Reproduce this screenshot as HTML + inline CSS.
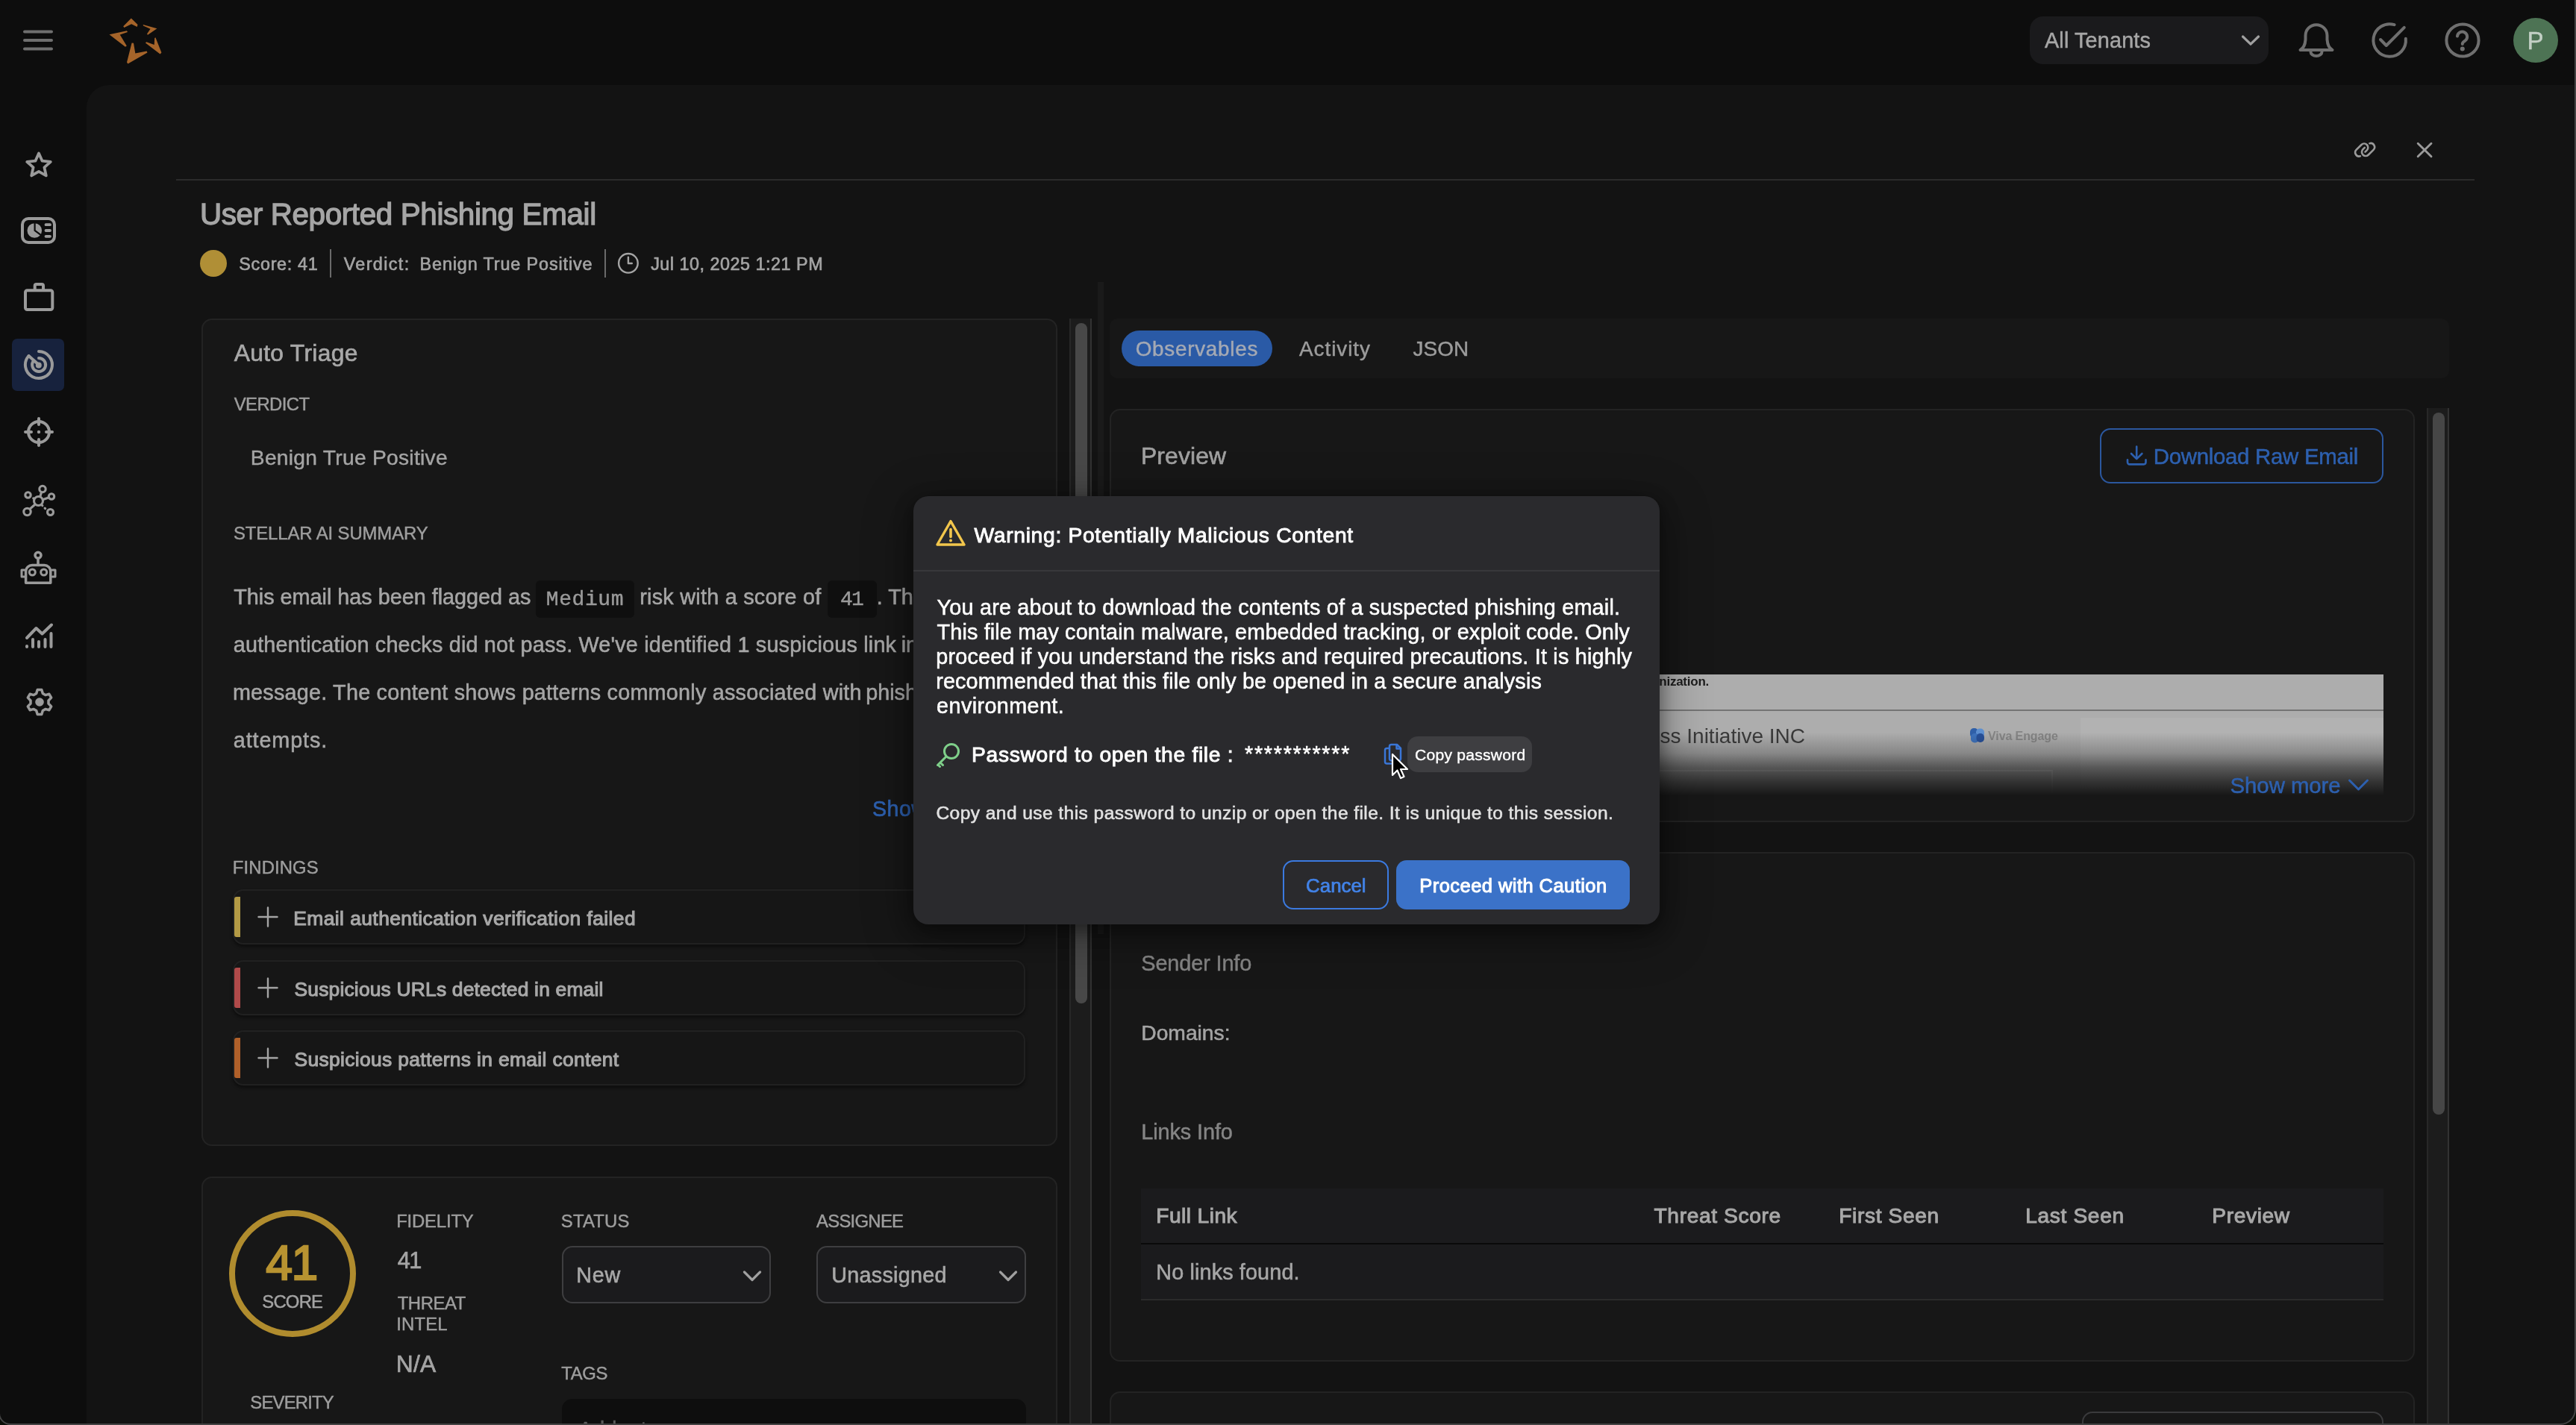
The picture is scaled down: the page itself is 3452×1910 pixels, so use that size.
<!DOCTYPE html>
<html lang="en"><head><meta charset="utf-8"><title>User Reported Phishing Email</title>
<style>
html,body{margin:0;padding:0}
body{width:3452px;height:1910px;background:#0d0d0d;position:relative;overflow:hidden;font-family:'Liberation Sans',sans-serif;transform:translateZ(0)}
.a{position:absolute}
.t{line-height:1;white-space:pre}
</style></head><body>
<div class="a" style="left:116px;top:114px;width:3334px;height:1800px;background:#131313;border-radius:30px 0 0 0;"></div>
<svg class="a" style="left:27px;top:36px;" width="48" height="36" viewBox="0 0 48 36" fill="none"><g stroke="#6f6f6f" stroke-width="4" stroke-linecap="round"><path d="M6 6.5H42M6 18H42M6 29.5H42"/></g></svg>
<svg class="a" style="left:140px;top:18px;" width="84" height="74" viewBox="0 0 84 74" fill="none"><g fill="#a5642a" transform="translate(-140,-18)"><path d="M175.8 24.6 L184.5 33 L183.7 36.1 L176.1 32.2 L166.4 37 L165.2 35.3Z"/><path d="M191.7 33 L210.4 38.2 L198 46.8 L197 45.4 L201.5 38.8 L192 34.4Z"/><path d="M146.5 46.3 L170 41.3 L171 42.9 L160.7 46.6 L169.8 61.5 L167.9 62.7Z"/><path d="M208.4 50.2 L216.4 70.6 L214.6 72.4 L194.9 57.6 L196.2 56.2 L206.7 59.9 L207.2 51Z"/><path d="M176.6 57.4 L179 57.7 L181.3 71.6 L196.6 68.6 L197.5 70.6 L171.4 85.5 L170 83.6Z"/></g></svg>
<div class="a" style="left:2720px;top:22px;width:320px;height:64px;background:#1a1a1c;border-radius:18px;"></div>
<div class="a t" id="t1" style="left:2740.00px;top:40.30px;font-size:28.86px;color:#a6a6a6;letter-spacing:0.123px;-webkit-text-stroke:0.5px #a6a6a6;">All Tenants</div>
<svg class="a" style="left:3000px;top:42px;" width="32" height="24" viewBox="0 0 32 24" fill="none"><path d="M5.5 7 L16 17.2 L26.5 7" stroke="#a0a0a0" stroke-width="3.2" stroke-linecap="round" stroke-linejoin="round"/></svg>
<svg class="a" style="left:3076px;top:26px;" width="56" height="56" viewBox="0 0 56 56" fill="none"><g stroke="#6f6f6f" stroke-width="4" stroke-linecap="round" stroke-linejoin="round" transform="translate(-3076,-26)"><path d="M3082.5 67 C3087 64.5 3089 60 3089.5 53 V47.7 A14.5 14.5 0 0 1 3118.5 47.7 V53 C3119 60 3121 64.5 3125.5 67 Z"/><path d="M3096.5 69.5 A7.5 5.5 0 0 0 3111.5 69.5"/></g></svg>
<svg class="a" style="left:3174px;top:26px;" width="56" height="56" viewBox="0 0 56 56" fill="none"><g stroke="#6f6f6f" stroke-width="4" stroke-linecap="round" stroke-linejoin="round" transform="translate(-3174,-26)"><path d="M3223.8 51.7 A21.75 21.75 0 1 1 3208.6 33.2"/><path d="M3190 53 L3197.8 61 L3221.8 36.8"/></g></svg>
<svg class="a" style="left:3272px;top:26px;" width="56" height="56" viewBox="0 0 56 56" fill="none"><g stroke="#6f6f6f" stroke-width="4" stroke-linecap="round" stroke-linejoin="round" transform="translate(-3272,-26)"><circle cx="3300" cy="54" r="21.6"/><path d="M3293 48.5 a6.6 6.6 0 1 1 10.5 6 c-2.6 1.6 -3.7 2.4 -3.7 4.4"/><circle cx="3299.8" cy="65.5" r="3" fill="#6f6f6f" stroke="none"/></g></svg>
<div class="a" style="left:3368px;top:24px;width:60px;height:60px;background:#4d7354;border-radius:30px;"></div>
<div class="a t" id="t2" style="left:3386.41px;top:38.18px;font-size:33.16px;color:#c3d0c5;-webkit-text-stroke:0.45px #c3d0c5;">P</div>
<svg class="a" style="left:0px;top:190px;" width="104" height="60" viewBox="0 0 104 60" fill="none"><path d="M52.0,15.4 L56.6,25.7 L67.8,26.9 L59.4,34.4 L61.8,45.4 L52.0,39.8 L42.2,45.4 L44.6,34.4 L36.2,26.9 L47.4,25.7Z" stroke="#9a9a9a" stroke-linecap="round" stroke-linejoin="round" stroke-width="3.8"/></svg>
<svg class="a" style="left:0px;top:280px;" width="104" height="60" viewBox="0 0 104 60" fill="none"><g stroke="#9a9a9a" stroke-linecap="round" stroke-linejoin="round" stroke-width="4" transform="translate(0,-280)"><rect x="30" y="293" width="43" height="32" rx="8"/><circle cx="46.3" cy="309" r="9.8" fill="#9a9a9a" stroke="none"/><path d="M46.6 298 V309 L56 315.8" stroke="#0d0d0d" stroke-width="2.2" stroke-linejoin="miter" stroke-linecap="butt"/><path d="M61.5 301.2H67M61.5 309H67M61.5 316.8H67" stroke-width="3.8"/></g></svg>
<svg class="a" style="left:0px;top:370px;" width="104" height="60" viewBox="0 0 104 60" fill="none"><g stroke="#9a9a9a" stroke-linecap="round" stroke-linejoin="round" stroke-width="4" transform="translate(0,-370)"><rect x="34" y="389.3" width="36.3" height="25.7" rx="2.5"/><path d="M46.7 389 V383 a2 2 0 0 1 2 -2 H56 a2 2 0 0 1 2 2 V389"/></g></svg>
<div class="a" style="left:16px;top:454px;width:70px;height:70px;background:#17223d;border-radius:7px;"></div>
<svg class="a" style="left:0px;top:454px;" width="104" height="70" viewBox="0 0 104 70" fill="none"><g stroke="#9a9a9a" stroke-linecap="round" stroke-linejoin="round" stroke-width="4" transform="translate(0,-454)"><path d="M52 471 a18 18 0 1 1 -13.5 6"/><path d="M38.5 477 L52 489"/><path d="M52 480 a9 9 0 1 1 -7 3.5"/><circle cx="51.8" cy="489.4" r="2" fill="#9a9a9a"/></g></svg>
<svg class="a" style="left:0px;top:550px;" width="104" height="60" viewBox="0 0 104 60" fill="none"><g stroke="#9a9a9a" stroke-linecap="round" stroke-linejoin="round" stroke-width="4" transform="translate(0,-550)"><circle cx="52" cy="579" r="14"/><path d="M52 561V569M52 589V597M34 579H42M62 579H70"/><circle cx="52" cy="579" r="1.2" fill="#9a9a9a" stroke-width="2"/></g></svg>
<svg class="a" style="left:0px;top:640px;" width="104" height="62" viewBox="0 0 104 62" fill="none"><g stroke="#9a9a9a" stroke-linecap="round" stroke-linejoin="round" stroke-width="3.1" transform="translate(0,-640)"><circle cx="51.5" cy="671.5" r="6"/><circle cx="57" cy="655.5" r="4.2"/><circle cx="69" cy="665.5" r="3.7"/><circle cx="37.5" cy="663.5" r="3.7"/><circle cx="36.5" cy="686" r="4.7"/><circle cx="67.5" cy="686.5" r="4"/><path d="M54 665 L55.3 660.5M57.8 669.5 L65 667M46.5 676.5 L40.2 682.2"/><path d="M45.4 668.2 L42 666.2M56.3 677.2 L63 684" stroke-dasharray="0.8 4.6"/></g></svg>
<svg class="a" style="left:0px;top:730px;" width="104" height="62" viewBox="0 0 104 62" fill="none"><g stroke="#9a9a9a" stroke-linecap="round" stroke-linejoin="round" stroke-width="3.5" transform="translate(0,-730)"><circle cx="51" cy="744.2" r="4"/><path d="M51 749V756"/><path d="M34.6 781.2 V766 a8.5 8.5 0 0 1 8.5 -8.5 H59.3 a8.5 8.5 0 0 1 8.5 8.5 V781.2 Z"/><path d="M33 764H29V773H33M70 764H74V773H70" stroke-width="3"/><circle cx="43.3" cy="767" r="4" stroke-width="3"/><circle cx="58.7" cy="767" r="4" stroke-width="3"/></g></svg>
<svg class="a" style="left:0px;top:826px;" width="104" height="52" viewBox="0 0 104 52" fill="none"><g stroke="#9a9a9a" stroke-linecap="round" stroke-linejoin="round" stroke-width="4" transform="translate(0,-826)"><path d="M36 855 L48.5 842 L56.5 849.5 L69 837.5"/><path d="M36 866V867M44 857V867M52 860V867M60.5 857V867M68.5 849V867"/></g></svg>
<svg class="a" style="left:0px;top:910px;" width="104" height="62" viewBox="0 0 104 62" fill="none"><g stroke="#9a9a9a" stroke-linecap="round" stroke-linejoin="round" stroke-width="3.5" transform="translate(0,-910)"><path d="M50.2,924.4 L55.8,924.4 L57.3,929.6 L60.8,931.6 L65.9,930.3 L68.7,935.1 L65.0,939.0 L65.0,943.0 L68.7,946.9 L65.9,951.7 L60.8,950.4 L57.3,952.4 L55.8,957.6 L50.2,957.6 L48.7,952.4 L45.2,950.4 L40.1,951.7 L37.3,946.9 L41.0,943.0 L41.0,939.0 L37.3,935.1 L40.1,930.3 L45.2,931.6 L48.7,929.6Z"/><circle cx="53" cy="941" r="5.8" fill="#9a9a9a" stroke="none"/></g></svg>
<svg class="a" style="left:3150px;top:184px;" width="40" height="34" viewBox="0 0 40 34" fill="none"><g stroke="#9a9a9a" stroke-width="2.6" stroke-linecap="round" stroke-linejoin="round"><g transform="translate(14.75,17) rotate(-45)"><path d="M-7.25 4.55 A5.2 5.2 0 0 1 -4.75 -5.2 L4.75 -5.2 A5.2 5.2 0 0 1 4.75 5.2 L1.5 5.2"/></g><g transform="translate(23.5,16.5) rotate(135)"><path d="M-7.25 4.55 A5.2 5.2 0 0 1 -4.75 -5.2 L4.75 -5.2 A5.2 5.2 0 0 1 4.75 5.2 L1.5 5.2"/></g></g></svg>
<svg class="a" style="left:3232px;top:184px;" width="34" height="34" viewBox="0 0 34 34" fill="none"><path d="M8.2 8.3 L26 25.8 M26 8.3 L8.2 25.8" stroke="#9a9a9a" stroke-width="2.9" stroke-linecap="round"/></svg>
<div class="a" style="left:236px;top:240px;width:3080px;height:2px;background:#2b2b2b;"></div>
<div class="a t" id="t3" style="left:267.98px;top:267.34px;font-size:40.38px;color:#a6a6a6;letter-spacing:-0.359px;-webkit-text-stroke:1.3px #a6a6a6;">User Reported Phishing Email</div>
<div class="a" style="left:268px;top:335px;width:36px;height:36px;background:#b08f36;border-radius:18px;"></div>
<div class="a t" id="t4" style="left:320.37px;top:342.68px;font-size:23.36px;color:#a4a4a4;letter-spacing:0.674px;-webkit-text-stroke:0.65px #a4a4a4;">Score: 41</div>
<div class="a" style="left:442px;top:334px;width:2px;height:38px;background:#6a6a6a;"></div>
<div class="a t" id="t5" style="left:460.70px;top:342.68px;font-size:23.36px;color:#a4a4a4;letter-spacing:1.372px;-webkit-text-stroke:0.65px #a4a4a4;">Verdict:</div>
<div class="a t" id="t6" style="left:562.58px;top:342.68px;font-size:23.36px;color:#a4a4a4;letter-spacing:0.879px;-webkit-text-stroke:0.65px #a4a4a4;">Benign True Positive</div>
<div class="a" style="left:810px;top:334px;width:2px;height:38px;background:#6a6a6a;"></div>
<svg class="a" style="left:824px;top:336px;" width="36" height="36" viewBox="0 0 36 36" fill="none"><g stroke="#a4a4a4" stroke-width="2.4" stroke-linecap="round" stroke-linejoin="round"><circle cx="17.9" cy="16.8" r="12.8"/><path d="M17.9 8.6V17H22.8"/></g></svg>
<div class="a t" id="t7" style="left:872.13px;top:342.68px;font-size:23.36px;color:#a4a4a4;letter-spacing:0.514px;-webkit-text-stroke:0.65px #a4a4a4;">Jul 10, 2025 1:21 PM</div>
<div class="a" style="left:270px;top:427px;width:1147px;height:1109px;background:#171717;border-radius:14px;border:2px solid #232323;box-sizing:border-box;"></div>
<div class="a t" id="t8" style="left:313.70px;top:457.72px;font-size:31.81px;color:#a8a8a8;letter-spacing:0.303px;-webkit-text-stroke:0.65px #a8a8a8;">Auto Triage</div>
<div class="a t" id="t9" style="left:313.70px;top:529.75px;font-size:23.86px;color:#9e9e9e;letter-spacing:-0.553px;-webkit-text-stroke:0.45px #9e9e9e;">VERDICT</div>
<div class="a t" id="t10" style="left:335.80px;top:598.89px;font-size:28.19px;color:#a4a4a4;letter-spacing:0.278px;-webkit-text-stroke:0.45px #a4a4a4;">Benign True Positive</div>
<div class="a t" id="t11" style="left:312.95px;top:702.75px;font-size:23.86px;color:#9e9e9e;letter-spacing:-0.083px;-webkit-text-stroke:0.45px #9e9e9e;">STELLAR AI SUMMARY</div>
<div class="a t" id="t12" style="left:313.25px;top:786.33px;font-size:28.79px;color:#a6a6a6;letter-spacing:-0.005px;-webkit-text-stroke:0.55px #a6a6a6;">This email has been flagged as</div>
<div class="a" style="left:718px;top:778px;width:132px;height:50px;background:#0f0f0f;border-radius:6px;"></div>
<div class="a t" id="t13" style="left:731.75px;top:789.79px;font-size:28px;color:#9a9a9a;letter-spacing:0.597px;-webkit-text-stroke:0.45px #9a9a9a;font-family:'Liberation Mono',monospace;">Medium</div>
<div class="a t" id="t14" style="left:857.20px;top:786.33px;font-size:28.79px;color:#a6a6a6;letter-spacing:0.253px;-webkit-text-stroke:0.55px #a6a6a6;">risk with a score of</div>
<div class="a" style="left:1109px;top:778px;width:66px;height:50px;background:#0f0f0f;border-radius:6px;"></div>
<div class="a t" id="t15" style="left:1125.99px;top:789.79px;font-size:28px;color:#9a9a9a;letter-spacing:-1.840px;-webkit-text-stroke:0.45px #9a9a9a;font-family:'Liberation Mono',monospace;">41</div>
<div class="a t" id="t16" style="left:1174.75px;top:786.33px;font-size:28.79px;color:#a6a6a6;-webkit-text-stroke:0.55px #a6a6a6;">. The</div>
<div class="a t" id="t17" style="left:312.80px;top:849.83px;font-size:28.79px;color:#a6a6a6;letter-spacing:0.187px;-webkit-text-stroke:0.55px #a6a6a6;">authentication checks did not pass. We&#x27;ve identified 1 suspicious link</div>
<div class="a t" id="t18" style="left:1207.70px;top:849.83px;font-size:28.79px;color:#a6a6a6;-webkit-text-stroke:0.55px #a6a6a6;">in the</div>
<div class="a t" id="t19" style="left:311.90px;top:913.83px;font-size:28.79px;color:#a6a6a6;letter-spacing:0.219px;-webkit-text-stroke:0.55px #a6a6a6;">message. The content shows patterns commonly associated with</div>
<div class="a t" id="t20" style="left:1160.20px;top:913.83px;font-size:28.79px;color:#a6a6a6;-webkit-text-stroke:0.55px #a6a6a6;">phishing</div>
<div class="a t" id="t21" style="left:312.80px;top:977.83px;font-size:28.79px;color:#a6a6a6;letter-spacing:0.887px;-webkit-text-stroke:0.55px #a6a6a6;">attempts.</div>
<div class="a t" id="t22" style="left:1169.11px;top:1069.91px;font-size:28.64px;color:#2d60af;letter-spacing:0.401px;-webkit-text-stroke:0.65px #2d60af;">Show more</div>
<div class="a t" id="t23" style="left:311.84px;top:1150.75px;font-size:23.86px;color:#9e9e9e;letter-spacing:0.124px;-webkit-text-stroke:0.45px #9e9e9e;">FINDINGS</div>
<div class="a" style="left:312px;top:1192px;width:1062px;height:74px;background:#161616;border-radius:14px;border:2px solid #212121;box-sizing:border-box;box-shadow:0 3px 4px rgba(0,0,0,.45);"></div>
<div class="a" style="left:314px;top:1202px;width:8px;height:54px;background:#b39a45;border-radius:3px 0 0 3px;"></div>
<svg class="a" style="left:341px;top:1211px;" width="36" height="36" viewBox="0 0 36 36" fill="none"><path d="M18 5.5V30.5M5.5 18H30.5" stroke="#a4a4a4" stroke-width="2.4" stroke-linecap="round"/></svg>
<div class="a t" id="t24" style="left:393.24px;top:1218.08px;font-size:26.4px;color:#a8a8a8;letter-spacing:0.432px;-webkit-text-stroke:1.1px #a8a8a8;">Email authentication verification failed</div>
<div class="a" style="left:312px;top:1286.5px;width:1062px;height:74px;background:#161616;border-radius:14px;border:2px solid #212121;box-sizing:border-box;box-shadow:0 3px 4px rgba(0,0,0,.45);"></div>
<div class="a" style="left:314px;top:1296.5px;width:8px;height:54px;background:#b04a4a;border-radius:3px 0 0 3px;"></div>
<svg class="a" style="left:341px;top:1305.5px;" width="36" height="36" viewBox="0 0 36 36" fill="none"><path d="M18 5.5V30.5M5.5 18H30.5" stroke="#a4a4a4" stroke-width="2.4" stroke-linecap="round"/></svg>
<div class="a t" id="t25" style="left:394.48px;top:1312.58px;font-size:26.4px;color:#a8a8a8;letter-spacing:0.192px;-webkit-text-stroke:1.1px #a8a8a8;">Suspicious URLs detected in email</div>
<div class="a" style="left:312px;top:1380.5px;width:1062px;height:74px;background:#161616;border-radius:14px;border:2px solid #212121;box-sizing:border-box;box-shadow:0 3px 4px rgba(0,0,0,.45);"></div>
<div class="a" style="left:314px;top:1390.5px;width:8px;height:54px;background:#b0602a;border-radius:3px 0 0 3px;"></div>
<svg class="a" style="left:341px;top:1399.5px;" width="36" height="36" viewBox="0 0 36 36" fill="none"><path d="M18 5.5V30.5M5.5 18H30.5" stroke="#a4a4a4" stroke-width="2.4" stroke-linecap="round"/></svg>
<div class="a t" id="t26" style="left:394.48px;top:1406.58px;font-size:26.4px;color:#a8a8a8;letter-spacing:0.346px;-webkit-text-stroke:1.1px #a8a8a8;">Suspicious patterns in email content</div>
<div class="a" style="left:270px;top:1577px;width:1147px;height:400px;background:#171717;border-radius:14px;border:2px solid #232323;box-sizing:border-box;"></div>
<div class="a" style="left:307px;top:1621.5px;width:170px;height:170px;border-radius:50%;border:8px solid #b08c2e;box-sizing:border-box"></div>
<div class="a t" id="t27" style="left:356.20px;top:1661.40px;font-size:64.29px;color:#b89331;letter-spacing:-1.400px;-webkit-text-stroke:2.3px #b89331;">41</div>
<div class="a t" id="t28" style="left:351.25px;top:1733.25px;font-size:23.86px;color:#a4a4a4;letter-spacing:-0.776px;-webkit-text-stroke:0.45px #a4a4a4;">SCORE</div>
<div class="a t" id="t29" style="left:335.25px;top:1868.25px;font-size:23.86px;color:#9e9e9e;letter-spacing:-0.786px;-webkit-text-stroke:0.45px #9e9e9e;">SEVERITY</div>
<div class="a t" id="t30" style="left:531.14px;top:1624.75px;font-size:23.86px;color:#9e9e9e;letter-spacing:-0.160px;-webkit-text-stroke:0.45px #9e9e9e;">FIDELITY</div>
<div class="a t" id="t31" style="left:532.82px;top:1675.15px;font-size:30.68px;color:#a4a4a4;letter-spacing:-1.702px;-webkit-text-stroke:0.7px #a4a4a4;">41</div>
<div class="a t" id="t32" style="left:532.63px;top:1734.75px;font-size:23.86px;color:#9e9e9e;letter-spacing:-0.378px;-webkit-text-stroke:0.45px #9e9e9e;">THREAT</div>
<div class="a t" id="t33" style="left:531.14px;top:1762.75px;font-size:23.86px;color:#9e9e9e;letter-spacing:0.210px;-webkit-text-stroke:0.45px #9e9e9e;">INTEL</div>
<div class="a t" id="t34" style="left:530.82px;top:1813.26px;font-size:31.74px;color:#a4a4a4;letter-spacing:0.207px;-webkit-text-stroke:0.7px #a4a4a4;">N/A</div>
<div class="a t" id="t35" style="left:751.75px;top:1624.75px;font-size:23.86px;color:#9e9e9e;letter-spacing:0.233px;-webkit-text-stroke:0.45px #9e9e9e;">STATUS</div>
<div class="a t" id="t36" style="left:1094.00px;top:1624.75px;font-size:23.86px;color:#9e9e9e;letter-spacing:-0.713px;-webkit-text-stroke:0.45px #9e9e9e;">ASSIGNEE</div>
<div class="a" style="left:752.5px;top:1670px;width:280px;height:77px;background:#1b1b1d;border-radius:14px;border:2px solid #3e3e40;box-sizing:border-box;"></div>
<div class="a t" id="t37" style="left:772.26px;top:1694.86px;font-size:28.72px;color:#a8a8a8;letter-spacing:0.720px;-webkit-text-stroke:0.6px #a8a8a8;">New</div>
<svg class="a" style="left:992.0px;top:1697.5px;" width="32" height="24" viewBox="0 0 32 24" fill="none"><path d="M5.5 7 L16 17.5 L26.5 7" stroke="#a0a0a0" stroke-width="3.2" stroke-linecap="round" stroke-linejoin="round"/></svg>
<div class="a" style="left:1094px;top:1670px;width:281px;height:77px;background:#1b1b1d;border-radius:14px;border:2px solid #3e3e40;box-sizing:border-box;"></div>
<div class="a t" id="t38" style="left:1114.20px;top:1694.86px;font-size:28.72px;color:#a8a8a8;letter-spacing:0.303px;-webkit-text-stroke:0.6px #a8a8a8;">Unassigned</div>
<svg class="a" style="left:1334.5px;top:1697.5px;" width="32" height="24" viewBox="0 0 32 24" fill="none"><path d="M5.5 7 L16 17.5 L26.5 7" stroke="#a0a0a0" stroke-width="3.2" stroke-linecap="round" stroke-linejoin="round"/></svg>
<div class="a t" id="t39" style="left:752.13px;top:1829.25px;font-size:23.86px;color:#9e9e9e;letter-spacing:-0.272px;-webkit-text-stroke:0.45px #9e9e9e;">TAGS</div>
<div class="a" style="left:752.5px;top:1875px;width:622.5px;height:60px;background:#0e0e0e;border-radius:14px;"></div>
<div class="a t" id="t40" style="left:775.00px;top:1902.26px;font-size:28.93px;color:#5c5c5c;-webkit-text-stroke:0.45px #5c5c5c;">Add a tag</div>
<div class="a" style="left:1433px;top:427px;width:30px;height:1490px;background:#1c1c1c;border-left:2px solid #282828;border-right:2px solid #323232;box-sizing:border-box;"></div>
<div class="a" style="left:1441px;top:432.5px;width:16px;height:912px;background:#484848;border-radius:8px;"></div>
<div class="a" style="left:1471px;top:378px;width:8px;height:874px;background:#1a1a1a;"></div>
<div class="a" style="left:1486.5px;top:427px;width:1795.5px;height:79.5px;background:#171717;border-radius:10px;"></div>
<div class="a" style="left:1503px;top:443px;width:202px;height:48px;background:#2a5aa6;border-radius:24px;"></div>
<div class="a t" id="t41" style="left:1521.69px;top:453.95px;font-size:27.88px;color:#a4a9b4;letter-spacing:0.717px;-webkit-text-stroke:0.45px #a4a9b4;">Observables</div>
<div class="a t" id="t42" style="left:1741.00px;top:453.95px;font-size:27.88px;color:#9c9c9c;letter-spacing:0.958px;-webkit-text-stroke:0.45px #9c9c9c;">Activity</div>
<div class="a t" id="t43" style="left:1893.56px;top:453.95px;font-size:27.88px;color:#9c9c9c;letter-spacing:0.118px;-webkit-text-stroke:0.45px #9c9c9c;">JSON</div>
<div class="a" style="left:1487px;top:547.5px;width:1748.5px;height:554px;background:#171717;border-radius:14px;border:2px solid #232323;box-sizing:border-box;"></div>
<div class="a t" id="t44" style="left:1529.01px;top:596.18px;font-size:31.89px;color:#a0a0a0;letter-spacing:0.113px;-webkit-text-stroke:0.6px #a0a0a0;">Preview</div>
<div class="a" style="left:2814px;top:573.5px;width:380px;height:74px;border-radius:14px;border:2px solid #2b579e;box-sizing:border-box;"></div>
<svg class="a" style="left:2845px;top:593px;" width="36" height="36" viewBox="0 0 36 36" fill="none"><g stroke="#2d60af" stroke-width="2.6" stroke-linecap="round" stroke-linejoin="round"><path d="M18.2 5.6V22M11 15 L18.2 22.2 L25.4 15"/><path d="M6 23.2V26.6 a2.8 2.8 0 0 0 2.8 2.8H27.7 a2.8 2.8 0 0 0 2.8 -2.8V23.2"/></g></svg>
<div class="a t" id="t45" style="left:2885.70px;top:596.85px;font-size:29.39px;color:#2d60af;letter-spacing:-0.270px;-webkit-text-stroke:0.5px #2d60af;">Download Raw Email</div>
<div class="a" style="left:1529px;top:904px;width:1665px;height:162px;background:#adadad;overflow:hidden"><div class="a" style="left:0;top:47px;width:1665px;height:2px;background:#747474"></div><div class="a" style="left:1259px;top:58px;width:406px;height:110px;background:#b2b2b2"></div><div class="a" style="left:-2px;top:128px;width:1224px;height:60px;border:2px solid #c2c2c2;box-sizing:border-box"></div><div class="a t" style="right:904px;top:1px;font-size:17px;font-weight:700;color:#1c1c1c;letter-spacing:-0.25px">You don't often get email from this sender. Learn why this is important to your organization.</div><div class="a t" style="right:775px;top:69px;font-size:28px;color:#3a3a3a">Awareness Initiative INC</div><svg class="a" style="left:1110px;top:71px" width="22" height="22" viewBox="0 0 22 22"><rect x="1" y="1" width="11" height="13" rx="5" fill="#2f5fa8"/><rect x="9" y="1.5" width="11" height="12" rx="5" fill="#5d8fd0"/><rect x="2" y="8" width="11" height="12.5" rx="5" fill="#3d72bd"/><rect x="9.5" y="8" width="10.5" height="12" rx="5" fill="#27509a"/></svg><div class="a t" style="left:1135px;top:75px;font-size:16px;font-weight:700;color:#858585;letter-spacing:-0.1px">Viva Engage</div><div class="a" style="left:0;top:0;width:1665px;height:162px;background:linear-gradient(to bottom,rgba(23,23,23,0) 0%,rgba(23,23,23,0) 48%,rgba(23,23,23,.25) 65%,rgba(23,23,23,.58) 77%,rgba(23,23,23,.82) 89%,rgba(23,23,23,1) 100%)"></div></div>
<div class="a t" id="t46" style="left:2988.58px;top:1037.85px;font-size:29.39px;color:#2d60af;letter-spacing:-0.067px;-webkit-text-stroke:0.5px #2d60af;">Show more</div>
<svg class="a" style="left:3144px;top:1040px;" width="32" height="24" viewBox="0 0 32 24" fill="none"><path d="M4.5 6 L16.5 18 L28.5 6" stroke="#2d60af" stroke-width="3" stroke-linecap="round" stroke-linejoin="round"/></svg>
<div class="a" style="left:1487px;top:1142px;width:1748.5px;height:683px;background:#171717;border-radius:14px;border:2px solid #232323;box-sizing:border-box;"></div>
<div class="a t" id="t47" style="left:1529.30px;top:1277.26px;font-size:28.93px;color:#858585;letter-spacing:-0.150px;-webkit-text-stroke:0.45px #858585;">Sender Info</div>
<div class="a t" id="t48" style="left:1529.29px;top:1370.08px;font-size:28.26px;color:#a4a4a4;letter-spacing:-0.014px;-webkit-text-stroke:0.55px #a4a4a4;">Domains:</div>
<div class="a t" id="t49" style="left:1529.24px;top:1503.26px;font-size:28.93px;color:#858585;letter-spacing:-0.122px;-webkit-text-stroke:0.45px #858585;">Links Info</div>
<div class="a" style="left:1529px;top:1593px;width:1665px;height:73px;background:#1b1b1d;"></div>
<div class="a" style="left:1529px;top:1666px;width:1665px;height:2px;background:#0a0a0a;"></div>
<div class="a" style="left:1529px;top:1668px;width:1665px;height:73px;background:#1b1b1d;"></div>
<div class="a" style="left:1529px;top:1741px;width:1665px;height:2px;background:#2b2b2b;"></div>
<div class="a t" id="t50" style="left:1549.30px;top:1616.06px;font-size:28.13px;color:#a8a8a8;letter-spacing:0.439px;-webkit-text-stroke:1.0px #a8a8a8;">Full Link</div>
<div class="a t" id="t51" style="left:2216.56px;top:1616.06px;font-size:28.13px;color:#a8a8a8;letter-spacing:0.635px;-webkit-text-stroke:1.0px #a8a8a8;">Threat Score</div>
<div class="a t" id="t52" style="left:2464.30px;top:1616.06px;font-size:28.13px;color:#a8a8a8;letter-spacing:0.621px;-webkit-text-stroke:1.0px #a8a8a8;">First Seen</div>
<div class="a t" id="t53" style="left:2714.30px;top:1616.06px;font-size:28.13px;color:#a8a8a8;letter-spacing:0.637px;-webkit-text-stroke:1.0px #a8a8a8;">Last Seen</div>
<div class="a t" id="t54" style="left:2964.30px;top:1616.06px;font-size:28.13px;color:#a8a8a8;letter-spacing:0.635px;-webkit-text-stroke:1.0px #a8a8a8;">Preview</div>
<div class="a t" id="t55" style="left:1549.25px;top:1690.93px;font-size:28.79px;color:#a6a6a6;letter-spacing:0.137px;-webkit-text-stroke:0.55px #a6a6a6;">No links found.</div>
<div class="a" style="left:1487px;top:1864.5px;width:1748.5px;height:200px;background:#171717;border-radius:14px;border:2px solid #232323;box-sizing:border-box;"></div>
<div class="a" style="left:2790px;top:1891.5px;width:404px;height:80px;border-radius:14px;border:2px solid #3a3a3c;box-sizing:border-box;"></div>
<div class="a" style="left:3252px;top:547px;width:30px;height:1370px;background:#1c1c1c;border-left:2px solid #282828;border-right:2px solid #323232;box-sizing:border-box;"></div>
<div class="a" style="left:3260px;top:552.5px;width:16px;height:941px;background:#464646;border-radius:8px;"></div>
<div class="a" style="left:1224px;top:665px;width:1000px;height:574px;background:#2a2a2d;border-radius:20px;box-shadow:0 6px 22px 2px rgba(0,0,0,.38),0 14px 60px 10px rgba(0,0,0,.28);"></div>
<div class="a" style="left:1224px;top:764px;width:1000px;height:2px;background:#38383b;"></div>
<svg class="a" style="left:1250px;top:692px;" width="48" height="44" viewBox="0 0 48 44" fill="none"><g transform="translate(-1250,-692)"><path d="M1274 698.6 L1292 730 H1256Z" stroke="#f2c64c" stroke-width="3.4" stroke-linejoin="round" fill="none"/><path d="M1274 709.6V719.4" stroke="#f2c64c" stroke-width="3.6" stroke-linecap="round"/><circle cx="1274" cy="724.5" r="2" fill="#f2c64c"/></g></svg>
<div class="a t" id="t56" style="left:1305.50px;top:703.09px;font-size:28.28px;color:#ffffff;letter-spacing:0.671px;-webkit-text-stroke:0.9px #ffffff;">Warning: Potentially Malicious Content</div>
<div class="a t" id="t57" style="left:1255.55px;top:800.33px;font-size:28.79px;color:#ffffff;letter-spacing:0.207px;-webkit-text-stroke:0.55px #ffffff;">You are about to download the contents of a suspected phishing email.</div>
<div class="a t" id="t58" style="left:1255.55px;top:833.33px;font-size:28.79px;color:#ffffff;letter-spacing:0.145px;-webkit-text-stroke:0.55px #ffffff;">This file may contain malware, embedded tracking, or exploit code. Only</div>
<div class="a t" id="t59" style="left:1254.20px;top:866.33px;font-size:28.79px;color:#ffffff;letter-spacing:0.197px;-webkit-text-stroke:0.55px #ffffff;">proceed if you understand the risks and required precautions. It is highly</div>
<div class="a t" id="t60" style="left:1254.20px;top:899.33px;font-size:28.79px;color:#ffffff;letter-spacing:0.139px;-webkit-text-stroke:0.55px #ffffff;">recommended that this file only be opened in a secure analysis</div>
<div class="a t" id="t61" style="left:1255.10px;top:932.33px;font-size:28.79px;color:#ffffff;letter-spacing:0.388px;-webkit-text-stroke:0.55px #ffffff;">environment.</div>
<svg class="a" style="left:1250px;top:990px;" width="42" height="42" viewBox="0 0 42 42" fill="none"><g stroke="#7fd08a" stroke-width="3" stroke-linecap="round" stroke-linejoin="round" transform="translate(-1250,-990)"><circle cx="1275" cy="1007" r="9.5"/><path d="M1268 1014 L1256.5 1025.5 M1260 1022 L1263.5 1025.5 M1257 1025 L1259.5 1027.5"/></g></svg>
<div class="a t" id="t62" style="left:1301.99px;top:997.09px;font-size:28.28px;color:#ffffff;letter-spacing:0.673px;-webkit-text-stroke:0.9px #ffffff;">Password to open the file :</div>
<div class="a t" id="t63" style="left:1668.05px;top:995.80px;font-size:28.86px;color:#ffffff;letter-spacing:1.682px;-webkit-text-stroke:0.5px #ffffff;">***********</div>
<svg class="a" style="left:1850px;top:992px;" width="34" height="38" viewBox="0 0 34 38" fill="none"><g stroke="#3a76d6" stroke-width="2.5" stroke-linecap="round" stroke-linejoin="round" transform="translate(-1850,-992)"><path d="M1862 1003 H1858.5 a2.5 2.5 0 0 0 -2.5 2.5 V1021 a2.5 2.5 0 0 0 2.5 2.5 H1864"/><path d="M1864.5 998 H1872 L1877 1003 V1017 a2.5 2.5 0 0 1 -2.5 2.5 H1864.5 a2.5 2.5 0 0 1 -2.5 -2.5 V1000.5 a2.5 2.5 0 0 1 2.5 -2.5Z"/><path d="M1871.5 998.5 V1003.5 H1876.5"/></g></svg>
<div class="a" style="left:1886px;top:987px;width:167px;height:48px;background:#3e3e41;border-radius:14px;"></div>
<div class="a t" id="t64" style="left:1896.01px;top:1000.93px;font-size:21.08px;color:#ffffff;letter-spacing:0.241px;-webkit-text-stroke:0.4px #ffffff;">Copy password</div>
<svg class="a" style="left:1858px;top:1006px;" width="34" height="42" viewBox="0 0 34 42" fill="none"><path d="M8 5 V33 L14.5 26.5 L19 37 L23.5 35 L19 25 H28Z" fill="#000" stroke="#fff" stroke-width="2.2" stroke-linejoin="round"/></svg>
<div class="a t" id="t65" style="left:1254.45px;top:1078.41px;font-size:24.56px;color:#e2e2e2;letter-spacing:0.433px;-webkit-text-stroke:0.55px #e2e2e2;">Copy and use this password to unzip or open the file. It is unique to this session.</div>
<div class="a" style="left:1719px;top:1153px;width:141.5px;height:66px;border-radius:14px;border:2px solid #3b7ae0;box-sizing:border-box;"></div>
<div class="a t" id="t66" style="left:1750.08px;top:1174.98px;font-size:25.93px;color:#4283e8;letter-spacing:-0.038px;-webkit-text-stroke:0.7px #4283e8;">Cancel</div>
<div class="a" style="left:1871px;top:1153px;width:313px;height:66px;background:#3b72c8;border-radius:14px;"></div>
<div class="a t" id="t67" style="left:1902.31px;top:1175.20px;font-size:25.49px;color:#ffffff;letter-spacing:0.454px;-webkit-text-stroke:1.0px #ffffff;">Proceed with Caution</div>
<div class="a" style="left:-2px;top:-40px;width:3454px;height:1950px;box-sizing:border-box;border:2px solid #434343;border-radius:0 0 21px 16px;box-shadow:0 0 0 30px #0b0e08;pointer-events:none"></div>
</body></html>
